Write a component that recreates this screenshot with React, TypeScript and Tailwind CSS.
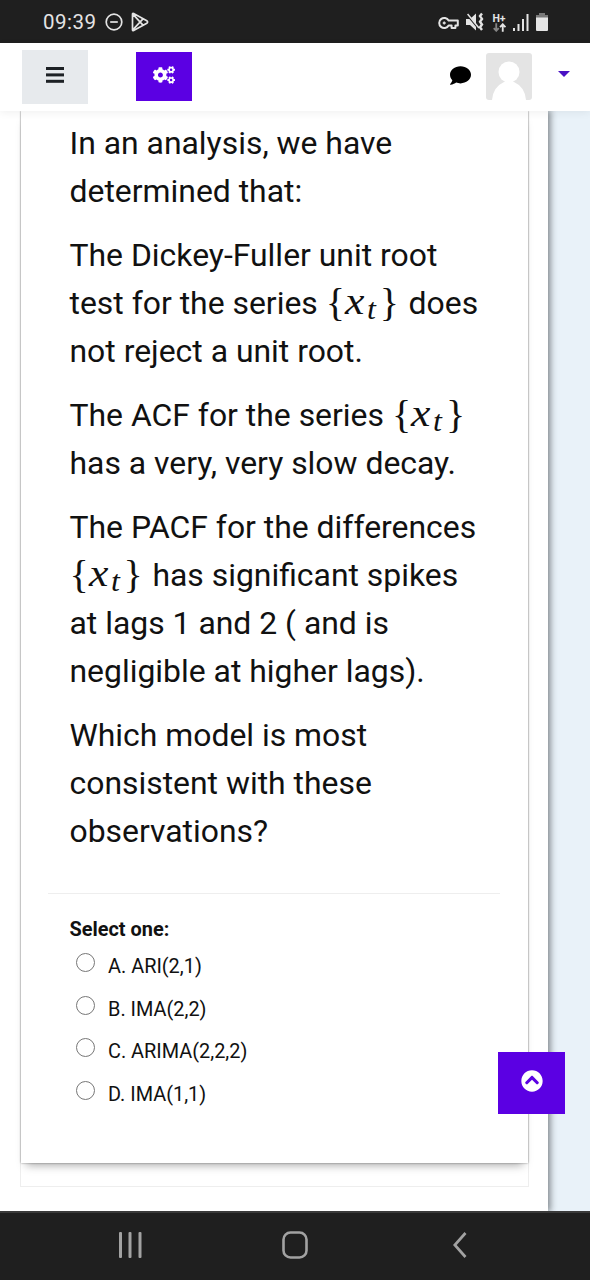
import React from 'react';
import { FaChevronCircleUp, FaCogs, FaComment } from 'react-icons/fa';

const options = ['A. ARI(2,1)', 'B. IMA(2,2)', 'C. ARIMA(2,2,2)', 'D. IMA(1,1)'];

function StatusBar() {
  return (
    <div className="flex h-[43px] shrink-0 items-center justify-between bg-[#1f1f1f] pl-[43px] pr-[42px] text-[#e4e4e4]">
      <div className="flex items-center">
        <span className="mt-[2px] w-[62px] whitespace-nowrap text-[20.5px] leading-none tracking-[0.5px]">09:39</span>
        <svg className="h-[18px] w-[18px]" viewBox="0 0 18 18" fill="none" stroke="currentColor" strokeWidth="1.7">
          <circle cx="9" cy="9" r="7.8" />
          <path d="M5.2 9h7.6" />
        </svg>
        <svg className="ml-[8px] h-[20px] w-[18px]" viewBox="0 0 18 20" fill="none" stroke="currentColor" strokeWidth="1.7" strokeLinejoin="round">
          <path d="M1.5 2.2v15.6q0 1.2 1.1.7L15.8 11.2q1.6-1.2 0-2.4L2.6 1.5q-1.1-.5-1.1.7ZM1.8 2.2 12 13.2M1.8 17.8 12 6.8" />
        </svg>
      </div>
      <div className="flex items-center">
        <svg className="mt-[2px] h-[14px] w-[21px]" viewBox="0 0 21 14" fill="none" stroke="currentColor" strokeWidth="2">
          <path d="M10.6 4.6A5 5 0 1 0 10.6 9.4H13.6V12H17.4V9.4H19.8V4.6Z" strokeLinejoin="round" />
          <circle cx="6.2" cy="7" r="1.1" fill="currentColor" strokeWidth="1" />
        </svg>
        <svg className="ml-[6px] h-[20px] w-[20px]" viewBox="0 0 20 20">
          <path d="M1 7h4l6-5.5v17L5 13H1Z" fill="currentColor" />
          <path d="M1 1.5 13 16" stroke="#1f1f1f" strokeWidth="1.8" />
          <path d="M2.6 2 14 16" stroke="currentColor" strokeWidth="1.5" />
          <path d="m17 1.5-2 2.6 2 2.8-2 2.8 2 2.8-2 2.8 2 2.7" fill="none" stroke="currentColor" strokeWidth="2.4" />
        </svg>
        <div className="ml-[7px] mt-[2px] flex w-[14px] flex-col items-center">
          <span className="text-[10.5px] font-bold leading-[9px]">H+</span>
          <svg className="h-[9px] w-[13px]" viewBox="0 0 12 8" fill="none" strokeWidth="1.7">
            <path d="M3 0v7M.7 4.5 3 7l2.3-2.5" stroke="#858585" />
            <path d="M9 8V1M6.5 3.7 9 1l2.5 2.7" stroke="currentColor" />
          </svg>
        </div>
        <svg className="ml-[7px] mt-[2px] h-[17px] w-[16px]" viewBox="0 0 16 17" fill="currentColor">
          <rect x="0" y="14" width="2" height="3" />
          <rect x="4.5" y="10" width="2" height="7" />
          <rect x="9" y="5" width="2" height="12" />
          <rect x="13.5" y="0" width="2" height="17" />
        </svg>
        <svg className="ml-[7px] h-[18px] w-[12px]" viewBox="0 0 12 18">
          <path d="M3 0h6v2h3v3H0V2h3Z" fill="#777" />
          <path d="M0 4.5h12V17q0 1-1 1H1q-1 0-1-1Z" fill="currentColor" />
        </svg>
      </div>
    </div>
  );
}

function Header() {
  return (
    <header className="relative z-10 flex h-[68px] shrink-0 bg-white pl-[22px] shadow-[0_2px_8px_rgba(0,0,0,0.06)]">
      <button className="mt-[7px] flex h-[54px] w-[66px] items-center justify-center bg-[#e7eaed]">
        <svg className="mt-[-4px] h-[16px] w-[18px]" viewBox="0 0 18 16" fill="#1d2125">
          <rect y="0" width="18" height="3" />
          <rect y="6.4" width="18" height="3" />
          <rect y="12.8" width="18" height="3" />
        </svg>
      </button>
      <button className="ml-[48px] mt-[9px] flex h-[49px] w-[56px] items-center justify-center bg-[#5b00e3] text-white">
        <FaCogs className="mt-[-3px] h-[22px] w-[22px]" />
      </button>
      <FaComment className="ml-[258px] mt-[22px] h-[21px] w-[21px] text-black" />
      <svg className="ml-[15px] mt-[10px] h-[47px] w-[46px]" viewBox="0 0 46 47">
        <rect width="46" height="47" rx="3" fill="#e4e4e4" />
        <circle cx="23" cy="19" r="10.5" fill="#fff" />
        <path d="M6 47q1-13 12-18h10q11 5 12 18Z" fill="#fff" />
      </svg>
      <svg className="ml-[26px] mt-[28px] h-[6px] w-[12px]" viewBox="0 0 12 6">
        <path d="M0 0h12L6 6Z" fill="#4a12c4" />
      </svg>
    </header>
  );
}

function SeriesX() {
  return (
    <span className="inline-flex h-[44px] w-[75px] items-baseline whitespace-nowrap font-['Liberation_Serif',serif] leading-[44px] tracking-normal">
      <span className="relative top-[2px] w-[19px] text-[40px]">{'{'}</span>
      <span className="w-[22px] origin-left scale-x-115 text-[38px] italic">x</span>
      <span className="relative top-[5px] w-[13px] origin-left scale-x-110 text-[29px] italic">t</span>
      <span className="relative top-[2px] w-[18px] text-[40px]">{'}'}</span>
    </span>
  );
}

function Question() {
  return (
    <div className="space-y-4 whitespace-nowrap pl-[48.5px] text-[31.9px] leading-[48px] text-[#111]">
      <p>In an analysis, we have<br />determined that:</p>
      <p>The Dickey-Fuller unit root<br />test for the series <SeriesX /> does<br />not reject a unit root.</p>
      <p>The ACF for the series <SeriesX /><br />has a very, very slow decay.</p>
      <p>The PACF for the differences<br /><SeriesX /> has significant spikes<br />at lags 1 and 2 ( and is<br />negligible at higher lags).</p>
      <p>Which model is most<br />consistent with these<br />observations?</p>
    </div>
  );
}

function Answers() {
  return (
    <fieldset className="pl-[48.5px] pt-[24px] text-[#111]">
      <legend className="contents">
        <span className="block text-[19.9px] font-bold leading-[24px]">Select one:</span>
      </legend>
      <div className="mt-[2px]">
        {options.map((option) => (
          <label key={option} className="flex h-[42.7px] items-start pl-[6.5px]">
            <input type="radio" name="answer" className="mt-[9px] h-[19px] w-[19px] shrink-0 appearance-none rounded-full border-[1.5px] border-[#777] bg-white" />
            <span className="ml-[13px] mt-[11px] text-[19.9px] leading-[24px]">{option}</span>
          </label>
        ))}
      </div>
    </fieldset>
  );
}

function NavBar() {
  return (
    <nav className="flex h-[69px] shrink-0 items-center border-t-2 border-[#3a3a3a] bg-[#1f1f1f] pb-[4px] pl-[119px] text-[#a2a2a2]">
      <svg className="h-[26px] w-[24px]" viewBox="0 0 24 26" fill="currentColor">
        <rect x="0" width="3" height="26" rx="1" />
        <rect x="9.5" width="3" height="26" rx="1" />
        <rect x="19.5" width="3" height="26" rx="1" />
      </svg>
      <svg className="ml-[139px] h-[28px] w-[26px]" viewBox="0 0 26 28" fill="none" stroke="currentColor" strokeWidth="2.6">
        <rect x="1.5" y="1.5" width="23" height="25" rx="7" />
      </svg>
      <svg className="ml-[145px] h-[26px] w-[14px]" viewBox="0 0 14 26" fill="none" stroke="currentColor" strokeWidth="2.7">
        <path d="M12.5 1 1.8 13l10.7 12" />
      </svg>
    </nav>
  );
}

export default function App() {
  return (
    <div className="relative flex h-[1280px] w-[590px] flex-col overflow-hidden bg-[#e9f2f9] font-[Roboto,sans-serif]">
      <StatusBar />
      <Header />
      <main className="h-[1100px] w-[548px] shrink-0 bg-white pl-[20px] shadow-[1px_0_7px_1px_rgba(70,75,80,0.7)]">
        <div className="h-[1076px] w-[509px] border-x border-b border-[#eeeeee]">
          <section className="h-[1052px] w-[507px] bg-white pt-[8px] shadow-[0_7px_9px_-5px_rgba(0,0,0,0.35),0_0_2px_rgba(0,0,0,0.4)]">
            <Question />
            <hr className="ml-[27px] mt-[38px] w-[452px] border-[#eeeeee]" />
            <Answers />
          </section>
        </div>
      </main>
      <NavBar />
      <button className="absolute left-[498px] top-[1052px] z-20 flex h-[62px] w-[67px] items-center justify-center bg-[#5b00e3] text-white">
        <FaChevronCircleUp className="mt-[-4px] h-[22px] w-[22px]" />
      </button>
    </div>
  );
}
